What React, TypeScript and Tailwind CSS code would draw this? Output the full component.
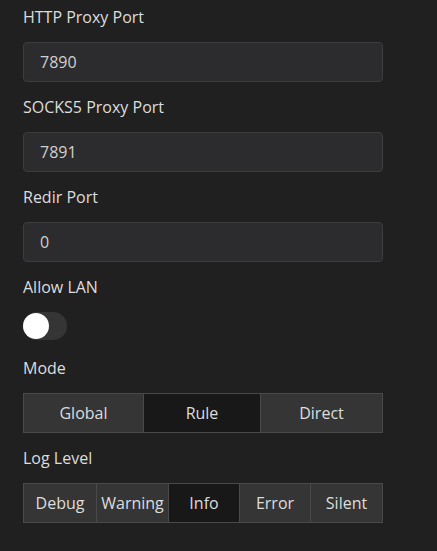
import React from "react";

const font = { fontFamily: '"Open Sans", "Noto Sans", sans-serif' };

function Label({ children }: { children: React.ReactNode }) {
  return <div className="h-[24px] leading-[24px] text-[16px] text-[#dddddd] mb-[13px]">{children}</div>;
}

function Input({ value }: { value: string }) {
  return (
    <div className="w-[360px] h-[40px] rounded-[4px] border border-[#3d3d3f] bg-[#2c2c2e] flex items-center pl-[16px] text-[16px] text-[#d0d0d0] mb-[13px]">
      {value}
    </div>
  );
}

function Seg({ items, active, widths }: { items: string[]; active: string; widths: number[] }) {
  return (
    <div className="flex w-[360px] h-[40px] border border-[#4a4a4a]">
      {items.map((it, i) => (
        <div
          key={it}
          style={{ width: widths[i] }}
          className={
            "h-full shrink-0 flex items-center justify-center text-[16px] text-[#dddddd] " +
            (i > 0 ? "border-l border-[#4a4a4a] " : "") +
            (it === active ? "bg-[#181818]" : "bg-[#353535]")
          }
        >
          {it}
        </div>
      ))}
    </div>
  );
}

export default function App() {
  return (
    <div className="w-[437px] h-[551px] bg-[#202020] pl-[23px] pt-[5px]" style={font}>
      <Label>HTTP Proxy Port</Label>
      <Input value="7890" />
      <Label>SOCKS5 Proxy Port</Label>
      <Input value="7891" />
      <Label>Redir Port</Label>
      <Input value="0" />
      <Label>Allow LAN</Label>
      <div className="relative w-[44px] h-[28px] rounded-full bg-[#353535] mb-[16px]">
        <div className="absolute left-0 top-[1px] w-[26px] h-[26px] rounded-full bg-white" />
      </div>
      <Label>Mode</Label>
      <div className="mb-[13px]">
        <Seg items={["Global", "Rule", "Direct"]} active="Rule" widths={[119, 117, 122]} />
      </div>
      <Label>Log Level</Label>
      <Seg items={["Debug", "Warning", "Info", "Error", "Silent"]} active="Info" widths={[72, 72, 71, 71, 72]} />
    </div>
  );
}
